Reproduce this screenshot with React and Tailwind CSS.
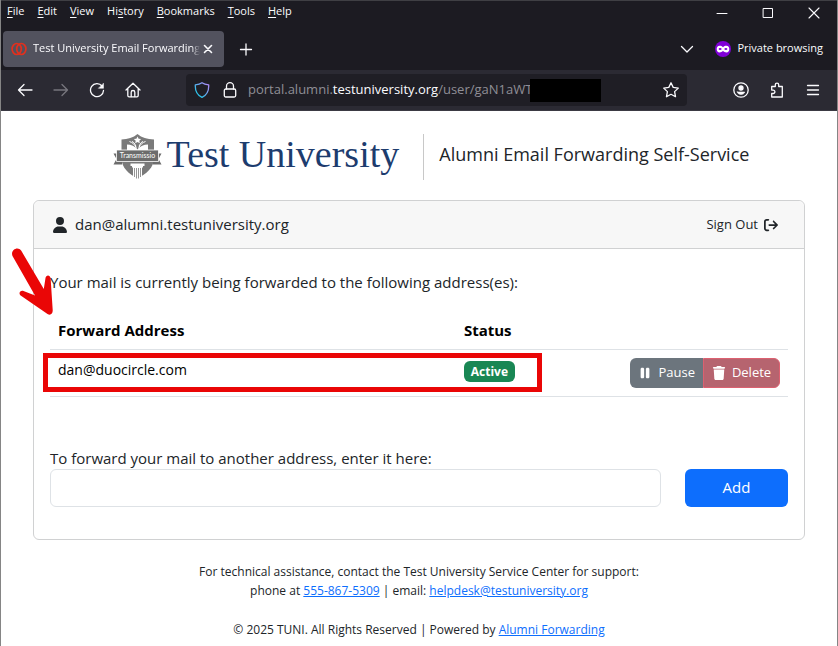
import React, { useState } from "react";
import {
  FaUser,
  FaPause,
  FaTrash,
  FaArrowRightFromBracket,
} from "react-icons/fa6";

const MENU_ITEMS = [
  { before: "", key: "F", after: "ile" },
  { before: "", key: "E", after: "dit" },
  { before: "", key: "V", after: "iew" },
  { before: "Hi", key: "s", after: "tory" },
  { before: "", key: "B", after: "ookmarks" },
  { before: "", key: "T", after: "ools" },
  { before: "", key: "H", after: "elp" },
];

// thin line icon used all over the browser toolbar
const LineIcon = ({ children, className = "", width = 1.3 }) => (
  <svg
    viewBox="0 0 16 16"
    className={`size-4 shrink-0 ${className}`}
    fill="none"
    stroke="currentColor"
    strokeWidth={width}
    strokeLinecap="round"
    strokeLinejoin="round"
    aria-hidden="true"
  >
    {children}
  </svg>
);

const ShieldIcon = () => (
  <svg viewBox="0 0 16 16" className="size-4 shrink-0" fill="none" aria-hidden="true">
    <defs>
      <linearGradient id="shield" x1="0" y1="1" x2="1" y2="0">
        <stop offset="0.2" stopColor="#2ac3e8" />
        <stop offset="0.9" stopColor="#a98bf5" />
      </linearGradient>
    </defs>
    <path
      d="M8 .7C6.300 1.900 3.700 2.600 1.300 2.900C1 8.500 2.900 13 8 15.400C13.100 13 15 8.500 14.700 2.900C12.300 2.600 9.700 1.900 8 .7Z"
      stroke="url(#shield)"
      strokeWidth="1.3"
      strokeLinejoin="round"
    />
  </svg>
);

const MaskIcon = () => (
  <svg viewBox="0 0 16 16" className="size-4 shrink-0" aria-hidden="true">
    <circle cx="8" cy="8" r="8" fill="#8000d7" />
    <path
      d="M8 6.200C6.900 5 5.900 4.700 4.700 4.700C2.600 4.700 1.700 6 1.700 8C1.700 10.100 2.800 11.400 4.500 11.400C6 11.400 7 10.300 8 9.900C9 10.300 10 11.400 11.500 11.400C13.200 11.400 14.300 10.100 14.300 8C14.300 6 13.400 4.700 11.300 4.700C10.100 4.700 9.100 5 8 6.200Z"
      fill="#fff"
    />
    <ellipse cx="5.100" cy="8.100" rx="1.500" ry="1" fill="#8000d7" />
    <ellipse cx="10.900" cy="8.100" rx="1.500" ry="1" fill="#8000d7" />
  </svg>
);

const Crest = () => (
  <svg viewBox="0 0 50 46" className="h-[46px] w-[50px] shrink-0" aria-hidden="true">
    <path
      d="M24.500 0C20 4 15 5 8.500 5.500V24C8.500 34 16 40 24.500 44.500C33 40 41 34 41 24V5.500C34 5 29 4 24.500 0Z"
      fill="#7a7a7a"
    />
    <path d="M24.500 2.500L25.600 4.800L28.100 5.100L26.300 6.800L26.800 9.300L24.500 8.100L22.200 9.300L22.700 6.800L20.900 5.100L23.400 4.800Z" fill="#fff" />
    <path d="M24.500 15.500C22 12 18 10.500 14 10.500V17H35V10.500C31 10.500 27 12 24.500 15.500Z" fill="#fff" />
    <path
      d="M23.500 14.500C22 10.500 19.500 8.500 16.500 7.500M23 12.500C22 9.500 20.500 8 19 7.500M25.500 14.500C27 10.500 29.500 8.500 32.500 7.500M26 12.500C27 9.500 28.500 8 30 7.500"
      stroke="#fff"
      strokeWidth="1"
      fill="none"
    />
    <path d="M.5 19.500H9V30.500H.5L3.500 25Z M48.500 19.500H40V30.500H48.500L45.500 25Z" fill="#6c6c6c" />
    <path d="M3.500 16H45.500V27.500H3.500Z" fill="#6c6c6c" stroke="#fff" strokeWidth=".8" />
    <text
      x="24.500"
      y="24"
      textAnchor="middle"
      className="fill-white font-['Lato',sans-serif] text-[7px]"
    >
      Transmissio
    </text>
    <path d="M17.500 29.500H31.500V32H30V33.500H19V32H17.500Z" fill="#fff" />
    <path d="M20 33H29V43L24.500 46L20 43Z" fill="#fff" />
    <path d="M21.500 34V43M23.500 34V44.500M25.500 34V44.500M27.500 34V43" stroke="#7a7a7a" strokeWidth=".8" />
  </svg>
);

const MenuBar = () => (
  <div className="flex h-[26px] items-start justify-between">
    <nav className="flex h-5 items-center gap-[13px] pl-[6px] text-[11px]">
      {MENU_ITEMS.map((item) => (
        <button key={item.key + item.after} type="button">
          {item.before}
          <span className="underline underline-offset-2">{item.key}</span>
          {item.after}
        </button>
      ))}
    </nav>
    <div className="flex h-6 items-center gap-[30px] pr-[15px]">
      <button type="button" aria-label="Minimize">
        <LineIcon width={1}><path d="M3 8.500H13" /></LineIcon>
      </button>
      <button type="button" aria-label="Maximize">
        <LineIcon width={1}><path d="M3.500 3.500H12.500V12.500H3.500Z" /></LineIcon>
      </button>
      <button type="button" aria-label="Close window">
        <LineIcon width={1.1}><path d="M3 3L13 13M13 3L3 13" /></LineIcon>
      </button>
    </div>
  </div>
);

const TabStrip = () => (
  <div className="flex h-[43px] items-center pr-[14px] pl-[2px]">
    <div className="flex h-9 w-[221px] items-center rounded-[4px] bg-[#52525e] pr-2 pl-2">
      <svg viewBox="0 0 16 14" className="h-[14px] w-4 shrink-0" fill="none" stroke="#e0301e" strokeWidth="1.7" aria-hidden="true">
        <ellipse cx="5.700" cy="7" rx="4.600" ry="5.500" />
        <ellipse cx="10.300" cy="7" rx="4.600" ry="5.500" />
      </svg>
      <span className="ml-[6px] flex-1 overflow-hidden mask-r-from-95% text-[11px] whitespace-nowrap">
        Test University Email Forwarding
      </span>
      <button type="button" aria-label="Close tab">
        <LineIcon width={1.6}><path d="M4.500 4.500L11.500 11.500M11.500 4.500L4.500 11.500" /></LineIcon>
      </button>
    </div>
    <button type="button" aria-label="New tab" className="ml-[14px]">
      <LineIcon><path d="M2.500 8.500H13.500M8 3V14" /></LineIcon>
    </button>
    <button type="button" aria-label="List all tabs" className="ml-auto">
      <LineIcon><path d="M2.500 5.500L8 11L13.500 5.500" /></LineIcon>
    </button>
    <div className="ml-5 flex items-center gap-[6px] text-[11px]">
      <MaskIcon />
      Private browsing
    </div>
  </div>
);

const Toolbar = () => (
  <div className="flex h-[41px] items-center border-b border-[#3b3a43] bg-[#2b2a33] px-4">
    <div className="flex items-center gap-5">
      <button type="button" aria-label="Back">
        <LineIcon><path d="M15 8H1.500M7 2.500L1.500 8L7 13.500" /></LineIcon>
      </button>
      <button type="button" aria-label="Forward" className="text-[#77767e]" disabled>
        <LineIcon><path d="M1 8H14.500M9 2.500L14.500 8L9 13.500" /></LineIcon>
      </button>
      <button type="button" aria-label="Reload">
        <LineIcon>
          <path d="M13 4A6.500 6.500 0 1 0 14.500 8.500" />
          <path d="M14.500 1.500V6.300H9.700Z" fill="currentColor" strokeWidth=".5" />
        </LineIcon>
      </button>
      <button type="button" aria-label="Home">
        <LineIcon>
          <path d="M1 8L8 1.200L15 8M2.800 6.500V13.500A1.300 1.300 0 0 0 4.100 14.800H11.900A1.300 1.300 0 0 0 13.200 13.500V6.500" />
          <path d="M6.200 14.500V10.300A1.800 1.800 0 0 1 9.800 10.300V14.500" />
        </LineIcon>
      </button>
    </div>
    <div className="ml-[45px] flex h-8 flex-1 items-center rounded-[4px] bg-[#1f1e25] px-2">
      <ShieldIcon />
      <LineIcon className="ml-3">
        <rect x="2.300" y="7" width="11.400" height="8" rx="1.500" />
        <path d="M4.500 7V4.200A3.500 3.500 0 0 1 11.500 4.200V7" />
      </LineIcon>
      <div className="ml-[10px] flex items-center text-[13px] whitespace-nowrap text-[#8f8e96]">
        portal.alumni.<span className="text-[#fbfbfe]">testuniversity.org</span>/user/gaN1aWT
        <span className="-ml-[2px] h-[23px] w-[71px] bg-black" />
      </div>
      <button type="button" aria-label="Bookmark this page" className="ml-auto">
        <LineIcon>
          <path d="M8 .8L10.200 5.400L15.300 6.100L11.600 9.600L12.500 14.700L8 12.300L3.500 14.700L4.400 9.600L.7 6.100L5.800 5.400Z" />
        </LineIcon>
      </button>
    </div>
    <div className="ml-[46px] flex items-center gap-5">
      <button type="button" aria-label="Account">
        <LineIcon>
          <circle cx="8" cy="8" r="7.200" />
          <circle cx="8" cy="6" r="2" fill="currentColor" />
          <path d="M4.300 10H11.700C11.500 11.500 10 12.400 8 12.400C6 12.400 4.500 11.500 4.300 10Z" fill="currentColor" strokeWidth=".6" />
        </LineIcon>
      </button>
      <button type="button" aria-label="Extensions">
        <LineIcon>
          <path d="M6.300 4.500V2.800A1.700 1.700 0 0 1 9.700 2.800V4.500H13.300V15H2.700V11.500H4.200A1.700 1.700 0 0 0 4.200 8.100H2.700V4.500Z" />
        </LineIcon>
      </button>
      <button type="button" aria-label="Open application menu">
        <LineIcon><path d="M2.500 3.500H13.500M2.500 8H13.500M2.500 12.500H13.500" /></LineIcon>
      </button>
    </div>
  </div>
);

const ForwardTable = ({ forwards }) => (
  <div className="relative mt-[18px]">
    <table className="w-full table-fixed text-left text-black">
      <thead>
        <tr className="h-[37px] border-b border-[#dee2e6] text-[15px]">
          <th className="w-[55%] px-2 font-bold">Forward Address</th>
          <th className="w-[21%] px-2 font-bold">Status</th>
          <th aria-label="Actions" />
        </tr>
      </thead>
      <tbody>
        {forwards.map((item) => (
          <tr key={item.address} className="h-[47px] border-b border-[#dee2e6] align-top">
            <td className="px-2 pt-[10px] text-sm leading-5">{item.address}</td>
            <td className="px-2 pt-[11px]">
              <span className="block w-[51px] rounded-md bg-[#198754] text-center text-xs leading-[21px] font-bold text-white">
                {item.status}
              </span>
            </td>
            <td className="pt-2 pr-2">
              <div className="flex h-[30px] justify-end text-[13px] text-white">
                <button type="button" className="flex w-[73px] items-center justify-end gap-[6px] rounded-l-md bg-[#6c757d] pr-2">
                  <FaPause className="size-[14px]" />
                  Pause
                </button>
                <button type="button" className="flex w-[77px] items-center justify-center gap-[6px] rounded-r-md border border-[#dc6070] bg-[#b6646f]">
                  <FaTrash className="size-[14px]" />
                  Delete
                </button>
              </div>
            </td>
          </tr>
        ))}
      </tbody>
    </table>

    {/* callout around the active address */}
    <div className="pointer-events-none absolute top-[41px] right-[246px] -left-[7px] h-[39px] border-5 border-[#ea0606]" />
    <svg
      viewBox="0 0 44 68"
      className="pointer-events-none absolute -top-16 -left-[39px] h-[68px] w-11"
      fill="#ea0606"
      aria-hidden="true"
    >
      <path d="M1.500 8C-1 2 7-2.500 10.300 2.800L32.800 41L34.500 30C35 26.500 39 26.500 39.600 30L41.700 62C42 66.500 39 67.500 36.500 66L10 47.800C7 45.500 9 42 12.500 43L24 47.500Z" />
    </svg>
  </div>
);

const App = () => {
  const [address, setAddress] = useState("");
  const forwards = [{ address: "dan@duocircle.com", status: "Active" }];

  return (
    <div className="min-h-screen border-x border-[#858585] bg-white font-['Open_Sans',sans-serif] text-[#212529]">
      <header className="border-t border-[#3f3f44] bg-[#1c1b22] text-[#fbfbfe]">
        <MenuBar />
        <TabStrip />
        <Toolbar />
      </header>

      <main className="px-8">
        <div className="flex h-[89px] items-end justify-center pb-5 pl-6">
          <Crest />
          <span className="ml-1 pb-[6px] font-['Liberation_Serif',serif] text-[38px] leading-10 text-[#1d3c6e]">
            Test University
          </span>
          <h1 className="ml-6 border-l border-[#c8c8c8] pb-[6px] pl-[15px] text-lg leading-10">
            Alumni Email Forwarding Self-Service
          </h1>
        </div>

        <section className="rounded-md border border-[#d0d1d2]">
          <div className="flex h-12 items-center rounded-t-md border-b border-[#d0d1d2] bg-[#f7f7f7] pr-[26px] pl-[18px]">
            <FaUser className="size-4" />
            <span className="ml-[7px] text-[15px]">dan@alumni.testuniversity.org</span>
            <a href="#signout" className="ml-auto flex items-center gap-[6px] text-[13px]">
              Sign Out
              <FaArrowRightFromBracket className="size-[14px]" />
            </a>
          </div>

          <div className="px-4 pt-[21px] pb-8">
            <p className="text-[15px] leading-6">
              Your mail is currently being forwarded to the following address(es):
            </p>
            <ForwardTable forwards={forwards} />

            <form className="mt-[50px] flex items-end gap-6" onSubmit={(e) => e.preventDefault()}>
              <div className="flex-1">
                <label htmlFor="address" className="block text-[15px] leading-[22px]">
                  To forward your mail to another address, enter it here:
                </label>
                <input
                  id="address"
                  type="email"
                  value={address}
                  onChange={(e) => setAddress(e.target.value)}
                  className="block h-[38px] w-full rounded-md border border-[#dee2e6] px-3 text-[15px] outline-none"
                />
              </div>
              <button type="submit" className="h-[38px] w-[103px] rounded-md bg-[#0d6efd] text-[15px] text-white">
                Add
              </button>
            </form>
          </div>
        </section>

        <footer className="pt-[22px] text-center text-xs leading-[19px]">
          <p>For technical assistance, contact the Test University Service Center for support:</p>
          <p>
            phone at{" "}
            <a href="tel:555-867-5309" className="text-[#0d6efd] underline">555-867-5309</a> | email:{" "}
            <a href="mailto:helpdesk@testuniversity.org" className="text-[#0d6efd] underline">
              helpdesk@testuniversity.org
            </a>
          </p>
          <p className="mt-5">
            © 2025 TUNI. All Rights Reserved | Powered by{" "}
            <a href="#forwarding" className="text-[#0d6efd] underline">Alumni Forwarding</a>
          </p>
        </footer>
      </main>
    </div>
  );
};

export default App;
